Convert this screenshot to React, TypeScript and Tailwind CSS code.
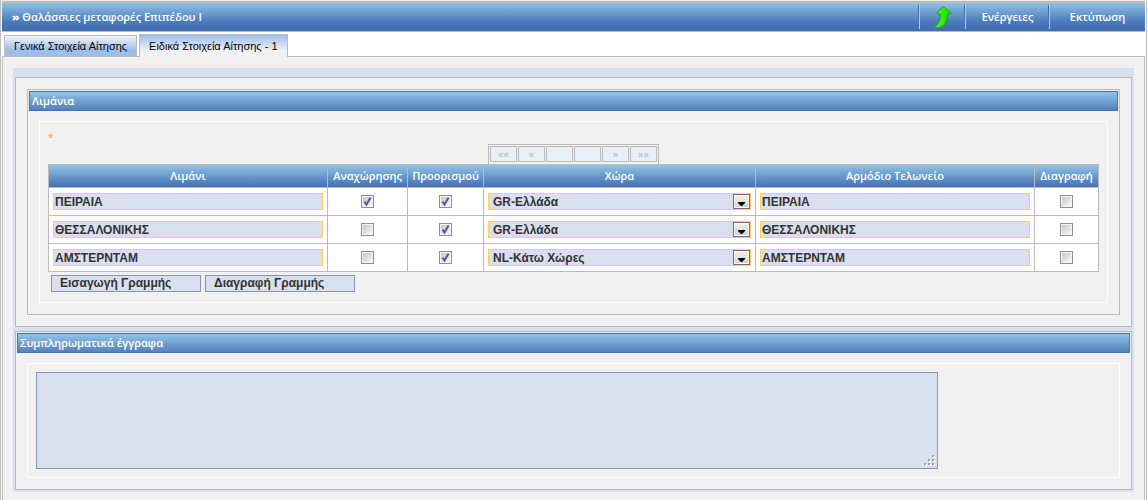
import { useState } from 'react';
import type { ReactNode } from 'react';

type Row = {
  port: string;
  departure: boolean;
  destination: boolean;
  country: string;
  office: string;
};

const tabs = ['Γενικά Στοιχεία Αίτησης', 'Ειδικά Στοιχεία Αίτησης - 1'];

const countries = ['GR-Ελλάδα', 'NL-Κάτω Χώρες'];

const initialRows: Row[] = [
  { port: 'ΠΕΙΡΑΙΑ', departure: true, destination: true, country: 'GR-Ελλάδα', office: 'ΠΕΙΡΑΙΑ' },
  { port: 'ΘΕΣΣΑΛΟΝΙΚΗΣ', departure: false, destination: true, country: 'GR-Ελλάδα', office: 'ΘΕΣΣΑΛΟΝΙΚΗΣ' },
  { port: 'ΑΜΣΤΕΡΝΤΑΜ', departure: false, destination: true, country: 'NL-Κάτω Χώρες', office: 'ΑΜΣΤΕΡΝΤΑΜ' },
];

const pagerButtons = [
  { label: '««', name: 'Πρώτη' },
  { label: '«', name: 'Προηγούμενη' },
  { label: '', name: 'Σελίδα' },
  { label: '', name: 'Σελίδες' },
  { label: '»', name: 'Επόμενη' },
  { label: '»»', name: 'Τελευταία' },
];

const fieldClass =
  "block h-[17px] w-full rounded-none border border-[#ffcc66] bg-[#d9e0ed] font-['Liberation_Sans',sans-serif] text-[12px] leading-[15px] font-bold text-[#333]";

const actionClass =
  "h-[17px] w-[150px] border border-[#8595b8] bg-[#d9e0ed] pl-2 text-left font-['Liberation_Sans',sans-serif] text-[12px] leading-[15px] font-bold text-[#333]";

const menuClass =
  'flex h-6 items-center justify-center border-l border-[#b3cdea] shadow-[-1px_0_0_#3f6cb0]';

function ArrowIcon() {
  return (
    <svg viewBox="0 0 20 24" className="h-6 w-5" aria-hidden="true">
      <defs>
        <linearGradient id="arrow" x1="0" y1="0" x2="1" y2="0">
          <stop offset="0" stopColor="#5cf52a" />
          <stop offset="0.5" stopColor="#2ff00a" />
          <stop offset="1" stopColor="#0fd000" />
        </linearGradient>
      </defs>
      <path
        d="M10.500 1.500 L18.500 8.500 L14.500 9.500 C14.500 16 12 20 8 22 C5.500 23 3 22.500 1 22 C5.500 20 7.500 15 7.500 9.500 L3.500 8 Z"
        fill="url(#arrow)"
        stroke="#18a526"
        strokeWidth="1"
        strokeLinejoin="round"
      />
    </svg>
  );
}

function Check({ checked, label, onChange }: { checked: boolean; label: string; onChange?: () => void }) {
  return (
    <span className="relative mx-auto block size-[13px]">
      <input
        type="checkbox"
        aria-label={label}
        checked={checked}
        onChange={onChange}
        className="block size-[13px] appearance-none border border-[#8e8f8f] bg-linear-to-br from-[#bfc3ca] to-[#fbfbfb] shadow-[inset_0_0_0_1px_#f4f4f4]"
      />
      {checked && (
        <svg viewBox="0 0 13 13" className="pointer-events-none absolute inset-0 size-[13px]" aria-hidden="true">
          <path d="M3.500 6.500 L5.500 9.500 L9.500 2.500" fill="none" stroke="#4a5f97" strokeWidth="2" />
        </svg>
      )}
    </span>
  );
}

function SectionTitle({ children }: { children: ReactNode }) {
  return (
    <h2 className="h-5 border border-[#4174b4] bg-linear-to-b from-[#92c4e5] to-[#5580bd] pl-[2px] text-[11px] leading-[18px] font-semibold text-white">
      {children}
    </h2>
  );
}

function PortsTable() {
  const [rows, setRows] = useState<Row[]>(initialRows);
  const [selected, setSelected] = useState<boolean[]>(initialRows.map(() => false));

  const updateRow = (index: number, patch: Partial<Row>) => {
    setRows(rows.map((row, i) => (i === index ? { ...row, ...patch } : row)));
  };

  const addRow = () => {
    setRows([...rows, { port: '', departure: false, destination: false, country: countries[0], office: '' }]);
    setSelected([...selected, false]);
  };

  const deleteRows = () => {
    setRows(rows.filter((_, i) => !selected[i]));
    setSelected(selected.filter(s => !s));
  };

  const th = 'border border-[#bbb] p-0 font-semibold';
  const td = 'border border-[#bbb] bg-white px-1 py-[5px]';

  return (
    <div className="border border-white px-2 pt-2 pb-[10px]">
      <div className="h-[14px] text-[10px] leading-[14px] font-bold text-[#ffb93c]">*</div>
      <div className="mx-auto flex w-[171px] gap-px border border-b-0 border-[#bbb] bg-[#f1f1f1] px-px pt-px pb-[2px]">
        {pagerButtons.map(b => (
          <button
            key={b.name}
            type="button"
            aria-label={b.name}
            disabled
            className="h-4 flex-1 border border-[#bbb] bg-[#e8eff7] text-[11px] leading-[14px] text-[#b0b4ba]"
          >
            {b.label}
          </button>
        ))}
      </div>

      <table className="w-full table-fixed border-collapse">
        <colgroup>
          <col />
          <col className="w-[80px]" />
          <col className="w-[76px]" />
          <col className="w-[272px]" />
          <col />
          <col className="w-[64px]" />
        </colgroup>
        <thead>
          <tr className="h-[23px] bg-linear-to-b from-[#92c4e5] to-[#416cb0] text-[11px] leading-[14px] text-white">
            <th className={th}>Λιμάνι</th>
            <th className={th}>Αναχώρησης</th>
            <th className={th}>Προορισμού</th>
            <th className={th}>Χώρα</th>
            <th className={th}>Αρμόδιο Τελωνείο</th>
            <th className={th}>Διαγραφή</th>
          </tr>
        </thead>
        <tbody>
          {rows.map((row, i) => (
            <tr key={i}>
              <td className={td}>
                <input
                  type="text"
                  aria-label="Λιμάνι"
                  value={row.port}
                  onChange={e => updateRow(i, { port: e.target.value })}
                  className={`${fieldClass} px-px`}
                />
              </td>
              <td className={td}>
                <Check
                  label="Αναχώρησης"
                  checked={row.departure}
                  onChange={() => updateRow(i, { departure: !row.departure })}
                />
              </td>
              <td className={td}>
                <Check
                  label="Προορισμού"
                  checked={row.destination}
                  onChange={() => updateRow(i, { destination: !row.destination })}
                />
              </td>
              <td className={td}>
                <div className="relative">
                  <select
                    aria-label="Χώρα"
                    value={row.country}
                    onChange={e => updateRow(i, { country: e.target.value })}
                    className={`${fieldClass} appearance-none pt-px pl-1`}
                  >
                    {countries.map(c => (
                      <option key={c}>{c}</option>
                    ))}
                  </select>
                  <span className="pointer-events-none absolute top-px right-px flex h-[15px] w-[17px] items-center justify-center border border-[#707070] bg-linear-to-b from-[#f2f2f2] to-[#cfcfcf] shadow-[inset_0_0_0_1px_#fafafa]">
                    <svg viewBox="0 0 7 4" className="mt-1 h-1 w-[7px]" aria-hidden="true">
                      <path d="M0 0 H7 V1 L4 4 H3 L0 1 Z" fill="#000" />
                    </svg>
                  </span>
                </div>
              </td>
              <td className={td}>
                <input
                  type="text"
                  aria-label="Αρμόδιο Τελωνείο"
                  value={row.office}
                  onChange={e => updateRow(i, { office: e.target.value })}
                  className={`${fieldClass} px-px`}
                />
              </td>
              <td className={td}>
                <Check
                  label="Διαγραφή"
                  checked={selected[i]}
                  onChange={() => setSelected(selected.map((s, j) => (j === i ? !s : s)))}
                />
              </td>
            </tr>
          ))}
        </tbody>
      </table>

      <div className="mt-[3px] ml-[3px] flex gap-1">
        <button type="button" onClick={addRow} className={actionClass}>
          Εισαγωγή Γραμμής
        </button>
        <button type="button" onClick={deleteRows} className={actionClass}>
          Διαγραφή Γραμμής
        </button>
      </div>
    </div>
  );
}

// Dotted grip drawn over the textarea's corner
function ResizeGrip() {
  const dots = [[8, 0], [4, 4], [8, 4], [0, 8], [4, 8], [8, 8]];
  return (
    <svg viewBox="0 0 11 11" className="pointer-events-none absolute right-[3px] bottom-[3px] size-[11px]" aria-hidden="true">
      {dots.map(([x, y]) => (
        <g key={`${x}-${y}`}>
          <rect x={x + 1} y={y + 1} width="2" height="2" fill="#fff" />
          <rect x={x} y={y} width="2" height="2" fill="#9aa2b3" />
        </g>
      ))}
    </svg>
  );
}

export default function App() {
  const [activeTab, setActiveTab] = useState(1);
  const [notes, setNotes] = useState('');

  return (
    <div className="mr-px flex min-h-screen flex-col border-x border-t border-x-[#bbb] border-t-[#eee] bg-white px-px font-['Open_Sans','Noto_Sans',sans-serif]">
      {/* Title bar */}
      <header className="flex h-[31px] items-center border-t-2 border-b border-[#bbb] bg-linear-to-b from-[#8fc1e3] via-[#4a78b8] via-70% to-[#416cb0] text-white">
        <h1 className="flex-1 pl-[10px] text-[11px] font-semibold">
          <span className="font-extrabold">»</span> Θαλάσσιες μεταφορές Επιπέδου Ι
        </h1>
        <nav className="flex h-6 text-[11px] font-semibold">
          <button type="button" aria-label="Επιστροφή" className={`${menuClass} w-[46px]`}>
            <ArrowIcon />
          </button>
          <button type="button" className={`${menuClass} w-[84px]`}>Ενέργειες</button>
          <button type="button" className={`${menuClass} w-[96px]`}>Εκτύπωση</button>
        </nav>
      </header>

      {/* Tabs */}
      <div
        role="tablist"
        className="flex h-[25px] items-end gap-[2px] border-b border-[#bbb] px-[2px] font-['Liberation_Sans',sans-serif] text-[11px]"
      >
        {tabs.map((tab, i) => (
          <button
            key={tab}
            type="button"
            role="tab"
            aria-selected={i === activeTab}
            onClick={() => setActiveTab(i)}
            className={
              i === activeTab
                ? '-mb-px h-[23px] border border-b-0 border-[#bbb] bg-linear-to-b from-[#9dbdec] to-[#f1f1f1] to-70% px-[9px]'
                : 'h-[21px] border border-b-0 border-[#bbb] bg-linear-to-b from-[#f4f4f4] to-[#9dbdec] to-70% px-[9px]'
            }
          >
            {tab}
          </button>
        ))}
      </div>

      {/* Form */}
      <main className="flex-1 border-x border-[#bbb] bg-[#f1f1f1] px-[10px] pt-[11px] pb-[6px]">
        <div className="bg-[#d9e0ed] px-[2px] pt-[9px] pb-[2px]">
          <section className="border border-[#bbb] bg-[#f1f1f1] p-[11px]">
            <div className="border border-[#bbb] p-px pb-[11px]">
              <SectionTitle>Λιμάνια</SectionTitle>
              <div className="px-[10px] pt-[10px]">
                <PortsTable />
              </div>
            </div>
          </section>

          <section className="mt-1 border border-[#bbb] bg-[#f1f1f1] p-px pb-[11px]">
            <SectionTitle>Συμπληρωματικά έγγραφα</SectionTitle>
            <div className="mx-[10px] mt-[10px] border border-white p-2">
              <div className="relative w-fit max-w-full">
                <textarea
                  aria-label="Συμπληρωματικά έγγραφα"
                  value={notes}
                  onChange={e => setNotes(e.target.value)}
                  className="block h-[97px] w-[902px] max-w-full border border-[#8595b8] bg-[#d9e0ed] p-1 text-[12px] [&::-webkit-resizer]:hidden"
                />
                <ResizeGrip />
              </div>
            </div>
          </section>
        </div>
      </main>
    </div>
  );
}
